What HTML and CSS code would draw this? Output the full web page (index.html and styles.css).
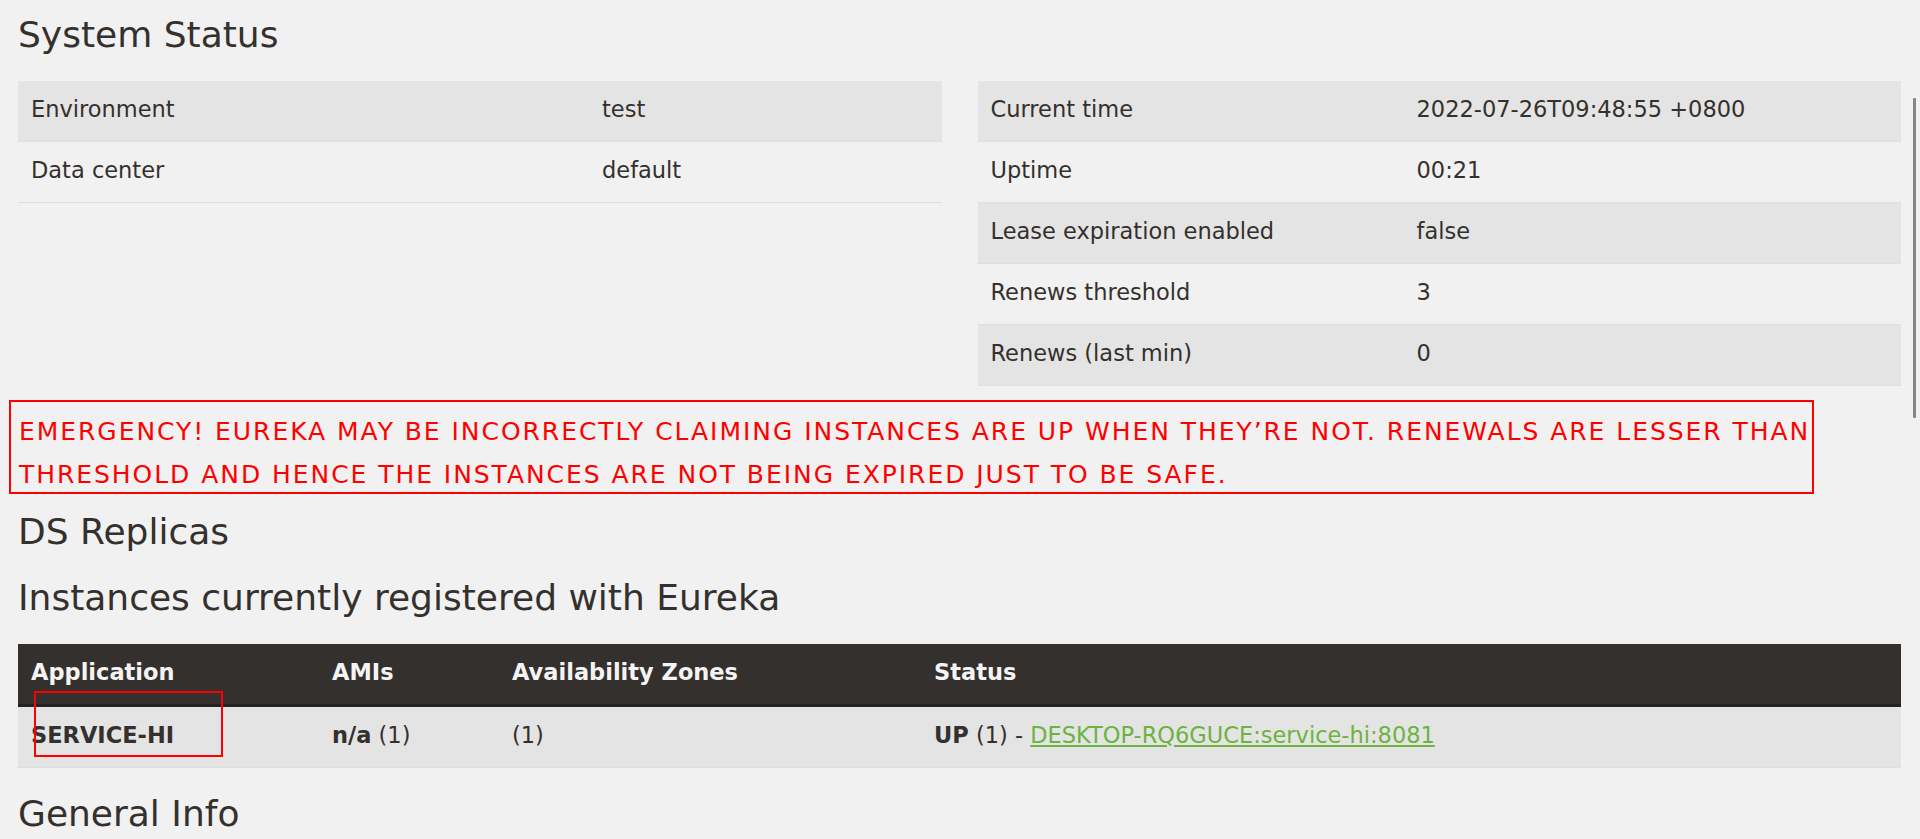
FILE: index.html
```html
<!DOCTYPE html>
<html lang="en">
<head>
<meta charset="utf-8">
<title>Eureka</title>
<link rel="stylesheet" href="styles.css">
</head>
<body>
<div class="page">
  <h1 class="title">System Status</h1>
  <div class="status-grid">
    <table class="kv kv-left">
      <tbody>
        <tr><td class="k">Environment</td><td>test</td></tr>
        <tr><td class="k">Data center</td><td>default</td></tr>
      </tbody>
    </table>
    <table class="kv kv-right">
      <tbody>
        <tr><td class="k">Current time</td><td>2022-07-26T09:48:55 +0800</td></tr>
        <tr><td class="k">Uptime</td><td>00:21</td></tr>
        <tr><td class="k">Lease expiration enabled</td><td>false</td></tr>
        <tr><td class="k">Renews threshold</td><td>3</td></tr>
        <tr><td class="k">Renews (last min)</td><td>0</td></tr>
      </tbody>
    </table>
  </div>

  <div class="emergency">EMERGENCY! EUREKA MAY BE INCORRECTLY CLAIMING INSTANCES ARE UP WHEN THEY’RE NOT. RENEWALS ARE LESSER THAN THRESHOLD AND HENCE THE INSTANCES ARE NOT BEING EXPIRED JUST TO BE SAFE.</div>

  <h1 class="title">DS Replicas</h1>
  <h1 class="title">Instances currently registered with Eureka</h1>

  <div class="instances-wrap">
    <table class="instances">
      <thead>
        <tr>
          <th class="c-app">Application</th>
          <th class="c-ami">AMIs</th>
          <th class="c-az">Availability Zones</th>
          <th>Status</th>
        </tr>
      </thead>
      <tbody>
        <tr>
          <td><b>SERVICE-HI</b></td>
          <td><b>n/a</b> (1)</td>
          <td>(1)</td>
          <td><b>UP</b> (1) - <a href="#">DESKTOP-RQ6GUCE:service-hi:8081</a></td>
        </tr>
      </tbody>
    </table>
    <div class="annot"></div>
  </div>

  <h1 class="title">General Info</h1>
</div>
<div class="scroll-thumb"></div>
</body>
</html>
```

FILE: styles.css
```css
html {
  overflow: hidden;
}

body {
  margin: 0;
  background: #f1f1f1;
  color: #34302d;
  font-family: "DejaVu Sans", "Liberation Sans", sans-serif;
  font-size: 22.5px;
}

.page {
  padding: 15px 19px 0 18px;
}

.title {
  margin: 0 0 26px;
  font-size: 36px;
  font-weight: normal;
  line-height: 40px;
  color: #34302d;
}

.status-grid {
  display: grid;
  grid-template-columns: 1fr 1fr;
  column-gap: 36px;
  align-items: start;
}

.kv {
  width: 100%;
  border-collapse: collapse;
  table-layout: fixed;
}

.kv td {
  padding: 12px 13px 16px;
  line-height: 32px;
  border-bottom: 1px solid #dedede;
  white-space: nowrap;
}

.kv tr:nth-child(odd) td {
  background: #e4e4e4;
}

.kv-left .k {
  width: 545px;
}

.kv-right .k {
  width: 400px;
}

.emergency {
  box-sizing: border-box;
  width: 1805px;
  height: 94px;
  margin: 14px 0 18px -9px;
  padding: 8px 0 0 8px;
  border: 2px solid #ff0000;
  color: #ff0000;
  font-size: 25px;
  letter-spacing: 1.95px;
  line-height: 43px;
}

.instances-wrap {
  position: relative;
  margin: 0 0 26px;
}

.instances {
  width: 100%;
  border-collapse: collapse;
  table-layout: fixed;
}

.instances th {
  text-align: left;
  background: #34302d;
  color: #f4f4f4;
  font-weight: bold;
  padding: 12px 13px 16px;
  line-height: 32px;
  border-bottom: 3px solid #222221;
}

.instances td {
  background: #e4e4e4;
  padding: 12px 13px 16px;
  line-height: 32px;
  border-bottom: 1px solid #dedede;
  white-space: nowrap;
}

.instances .c-app {
  width: 275px;
}

.instances .c-ami {
  width: 154px;
}

.instances .c-az {
  width: 396px;
}

.instances a {
  color: #6db33f;
  text-decoration: underline;
}

.annot {
  position: absolute;
  left: 16px;
  top: 47px;
  width: 185px;
  height: 62px;
  border: 2px solid #ff0000;
}

.scroll-thumb {
  position: fixed;
  top: 98px;
  right: 4px;
  width: 3px;
  height: 320px;
  background: #878787;
  border-radius: 1px;
}
```
